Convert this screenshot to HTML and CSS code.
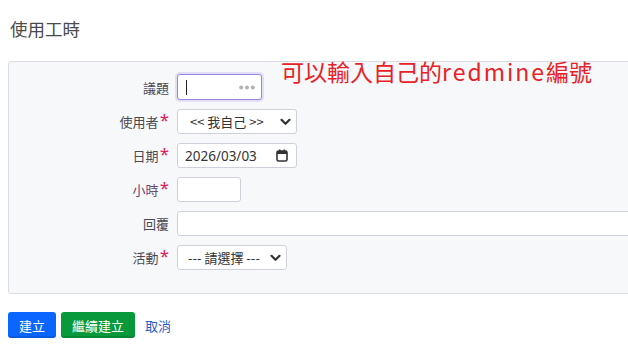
FILE: index.html
```html
<!DOCTYPE html>
<html lang="zh-Hant">
<head>
<meta charset="utf-8">
<title>使用工時</title>
<link rel="stylesheet" href="styles.css">
</head>
<body>
<div class="page">
  <h2 class="title">使用工時</h2>
  <div class="box">
    <div class="form">
      <label class="lbl">議題</label>
      <div class="field">
        <div class="ctl ctl-issue focus">
          <span class="caret"></span>
          <svg class="dots" width="16" height="5" viewBox="0 0 16 5"><circle cx="2.2" cy="2.5" r="2" fill="#b3b3b3"/><circle cx="8" cy="2.5" r="2" fill="#b3b3b3"/><circle cx="13.8" cy="2.5" r="2" fill="#b3b3b3"/></svg>
        </div>
      </div>

      <label class="lbl">使用者<span class="req">*</span></label>
      <div class="field">
        <div class="ctl ctl-select ctl-user">
          <span class="val">&lt;&lt; 我自己 &gt;&gt;</span>
          <svg class="chev" width="11" height="8" viewBox="0 0 11 8"><path d="M1.5 1.8 L5.5 5.8 L9.5 1.8" fill="none" stroke="#333" stroke-width="2.2" stroke-linecap="round" stroke-linejoin="round"/></svg>
        </div>
      </div>

      <label class="lbl">日期<span class="req">*</span></label>
      <div class="field">
        <div class="ctl ctl-date">
          <span class="val date">2026/03/03</span>
          <svg class="cal" width="12" height="13" viewBox="0 0 12 13"><rect x="1" y="2" width="10" height="10" rx="1.5" fill="none" stroke="#333" stroke-width="1.6"/><rect x="1" y="2" width="10" height="3" fill="#333"/><rect x="3" y="0.5" width="1.5" height="2.5" fill="#333"/><rect x="7.5" y="0.5" width="1.5" height="2.5" fill="#333"/></svg>
        </div>
      </div>

      <label class="lbl lbl-hours">小時<span class="req">*</span></label>
      <div class="field">
        <div class="ctl ctl-hours"></div>
      </div>

      <label class="lbl">回覆</label>
      <div class="field">
        <div class="ctl ctl-comment"></div>
      </div>

      <label class="lbl">活動<span class="req">*</span></label>
      <div class="field">
        <div class="ctl ctl-select ctl-activity">
          <span class="val">--- 請選擇 ---</span>
          <svg class="chev" width="11" height="8" viewBox="0 0 11 8"><path d="M1.5 1.8 L5.5 5.8 L9.5 1.8" fill="none" stroke="#333" stroke-width="2.2" stroke-linecap="round" stroke-linejoin="round"/></svg>
        </div>
      </div>
    </div>
    <div class="note">可以輸入自己的<span class="latin">redmine</span>編號</div>
  </div>
  <div class="actions">
    <button class="btn btn-primary">建立</button>
    <button class="btn btn-success">繼續建立</button>
    <a class="cancel" href="#">取消</a>
  </div>
</div>
</body>
</html>
```

FILE: styles.css
```css
html, body {
  margin: 0;
  padding: 0;
  background: #ffffff;
  overflow: hidden;
}
body {
  font-family: "Noto Sans", "Noto Sans CJK TC", sans-serif;
  color: #484848;
  font-size: 13px;
}
.page {
  padding: 0 0 0 8px;
}
.title {
  margin: 0;
  padding: 17px 0 0 2px;
  height: 44px;
  box-sizing: border-box;
  font-size: 17.5px;
  font-weight: 400;
  color: #4a4a4a;
  font-family: "Noto Sans CJK TC", sans-serif;
  line-height: 24px;
}
.box {
  position: relative;
  margin-top: 17px;
  width: 640px;
  height: 233px;
  box-sizing: border-box;
  background: #f7f8fa;
  border: 1px solid #dbdce3;
  border-radius: 3px;
  padding-top: 12px;
}
.form {
  display: grid;
  grid-template-columns: 160px 1fr;
  column-gap: 8px;
  row-gap: 9px;
  align-items: center;
}
.lbl {
  text-align: right;
  font-family: "Noto Sans CJK TC", sans-serif;
  font-size: 13px;
  color: #4a4a55;
  line-height: 25px;
}
.lbl-hours {
  color: #6a4a78;
}
.req {
  color: #e0195b;
  font-family: "Noto Sans", sans-serif;
  font-size: 17px;
  line-height: 10px;
  margin-left: 1px;
  position: relative;
  top: -1px;
}
.field {
  display: flex;
}
.ctl {
  box-sizing: border-box;
  height: 25px;
  background: #fff;
  border: 1px solid #cfd0da;
  border-radius: 3px;
  display: flex;
  align-items: center;
  font-family: "Noto Sans", "Noto Sans CJK TC", sans-serif;
  font-size: 13.5px;
  color: #333;
}
.ctl-issue {
  width: 85px;
  height: 26px;
  padding: 0 6px 0 8px;
  justify-content: space-between;
}
.focus {
  border-color: #9a84e6;
  box-shadow: 0 0 0 2px rgba(154, 132, 230, 0.22);
}
.caret {
  width: 1px;
  height: 15px;
  background: #222;
}
.dots {
  display: block;
}
.ctl-select {
  justify-content: space-between;
  padding: 0 5px 0 12px;
}
.ctl-user {
  width: 120px;
}
.ctl-activity {
  width: 110px;
  padding-left: 10px;
}
.val {
  font-family: "Noto Sans CJK TC", sans-serif;
  font-size: 13px;
  color: #333;
  white-space: nowrap;
}
.ctl-date {
  width: 120px;
  padding: 0 8px 0 7px;
  justify-content: space-between;
}
.val.date {
  font-family: "Noto Sans", sans-serif;
  font-size: 13.5px;
}
.ctl-hours {
  width: 64px;
}
.ctl-comment {
  flex: 1;
}
.note {
  position: absolute;
  left: 272px;
  top: -6px;
  font-family: "Noto Sans CJK TC", sans-serif;
  font-size: 23px;
  line-height: 30px;
  color: #e82127;
  white-space: nowrap;
}
.latin {
  letter-spacing: 2px;
}
.actions {
  display: flex;
  align-items: center;
  gap: 5px;
  margin-top: 18px;
}
.btn {
  height: 26px;
  border: none;
  border-radius: 3px;
  padding: 0 11px;
  font-family: "Noto Sans CJK TC", sans-serif;
  font-size: 13px;
  color: #fff;
  cursor: pointer;
}
.btn-primary {
  background: #0a66ff;
  box-shadow: inset 0 -2px 0 rgba(0, 0, 0, 0.12);
}
.btn-success {
  background: #07993a;
  box-shadow: inset 0 -2px 0 rgba(0, 0, 0, 0.12);
}
.cancel {
  margin-left: 5px;
  color: #2a5cc8;
  text-decoration: none;
  font-family: "Noto Sans CJK TC", sans-serif;
  font-size: 13px;
}
```
